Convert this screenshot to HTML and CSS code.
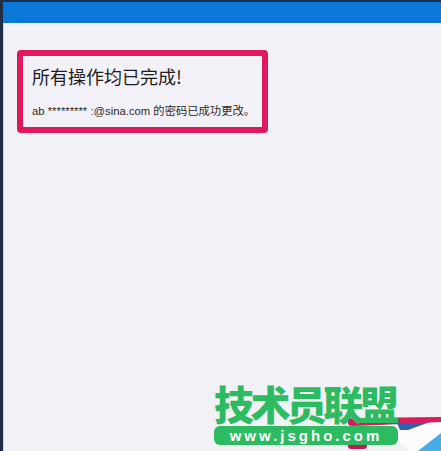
FILE: index.html
```html
<!DOCTYPE html>
<html lang="zh-CN">
<head>
<meta charset="utf-8">
<title>所有操作均已完成</title>
<link rel="stylesheet" href="styles.css">
</head>
<body>
<div class="window">
  <div class="titlebar"></div>
  <main class="content">
    <section class="notice">
      <h1 class="title">所有操作均已完成!</h1>
      <p class="message">ab ********* :@sina.com 的密码已成功更改。</p>
    </section>
  </main>
</div>
<svg class="corner" viewBox="0 0 101 51" width="101" height="51" aria-hidden="true">
  <polygon points="30,26 101,22 101,51 72,51" fill="#fbfbfd"/>
  <polygon points="57,23 90,22 68,30 60,30" fill="#2f62b4"/>
  <path d="M8,21 Q8,18 12,18 L101,17 L101,22 L40,25 L12,26 Q8,26 8,23 Z" fill="#dc1a5e"/>
  <path d="M8,40 H27 V46 Q27,49 24,49 H11 Q8,49 8,46 Z" fill="#c8174f"/>
  <polygon points="78,51 101,33 101,51" fill="#45aee8"/>
</svg>
<div class="logo">
  <div class="logo-name">技术员联盟</div>
  <div class="logo-url">www.jsgho.com</div>
</div>
</body>
</html>
```
FILE: styles.css
```css
html, body {
  margin: 0;
  padding: 0;
  width: 441px;
  height: 451px;
  overflow: hidden;
  background: #f2f1f6;
  font-family: "Noto Sans CJK SC", "Liberation Sans", sans-serif;
}
.window {
  height: 451px;
  box-sizing: border-box;
  border-left: 3px solid #1f2e44;
  border-top: 2px solid #15324f;
  display: flex;
  flex-direction: column;
}
.titlebar {
  height: 21px;
  flex: none;
  background: #0b78d8;
}
.content {
  flex: 1;
  padding: 27px 0 0 13px;
  border-left: 1px solid #c9dcec;
}
.notice {
  width: 251px;
  height: 83px;
  box-sizing: border-box;
  border: 6px solid #e0195f;
  border-radius: 4px;
  padding: 7px 0 0 9px;
  background: #f3f1f8;
}
.title {
  margin: 0;
  font-size: 18px;
  line-height: 26px;
  font-weight: 400;
  color: #1c1c1c;
  font-family: "Noto Sans CJK SC", sans-serif;
}
.message {
  margin: 14px 0 0;
  font-size: 11.3px;
  line-height: 16px;
  color: #2a2a2a;
  white-space: nowrap;
  font-family: "Liberation Sans", "Noto Sans CJK SC", sans-serif;
}
.corner {
  position: absolute;
  left: 340px;
  top: 400px;
}
.logo {
  position: absolute;
  left: 214px;
  top: 380px;
  width: 184px;
}
.logo-name {
  font-size: 40px;
  line-height: 46px;
  font-weight: 900;
  letter-spacing: -3.6px;
  color: #2dbb62;
  white-space: nowrap;
  font-family: "Noto Sans CJK SC", sans-serif;
}
.logo-url {
  height: 19px;
  border-radius: 6px;
  background: #2dbb62;
  color: #fff;
  font-family: "Liberation Sans", sans-serif;
  font-size: 15px;
  font-weight: 700;
  line-height: 19px;
  letter-spacing: 3px;
  text-align: center;
  white-space: nowrap;
}
```
